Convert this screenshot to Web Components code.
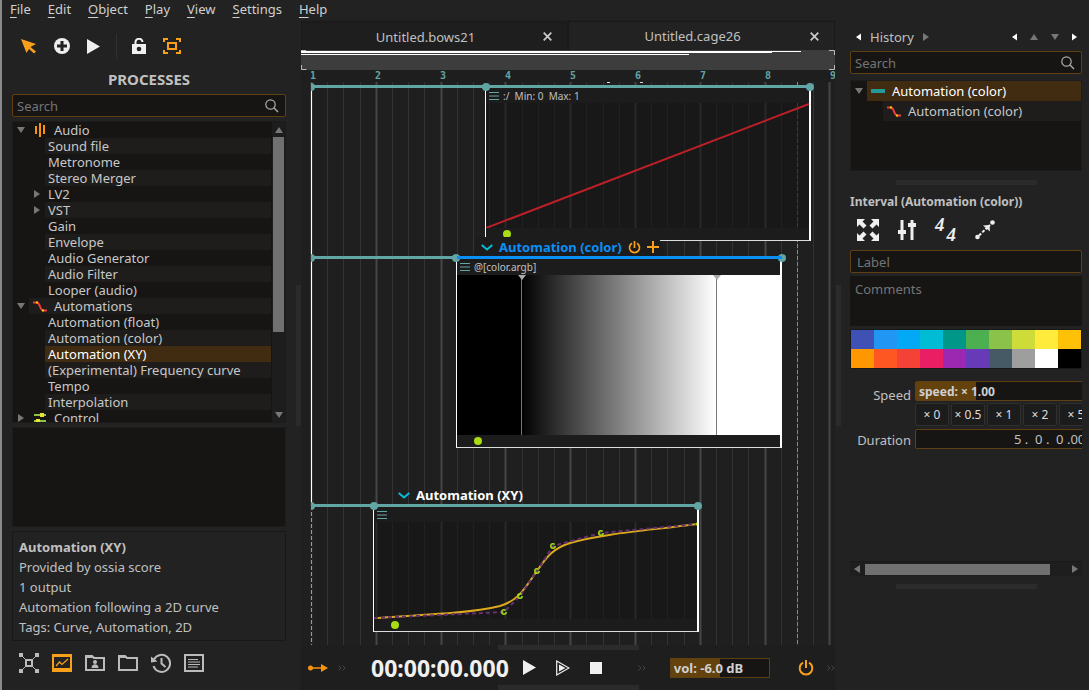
<!DOCTYPE html>
<html lang="en">
<head>
<meta charset="utf-8">
<title>score</title>
<style>
html,body{margin:0;background:#222;height:100%}
body{font:13px/16px "Noto Sans","Open Sans",sans-serif;color:#c0c0c0}
</style>
</head>
<body>
<score-app></score-app>
<script>
const RESET = `*{box-sizing:border-box}
button{font:inherit;color:inherit;background:none;border:0;padding:0;margin:0;display:flex;align-items:center;justify-content:center}
input,textarea{font:inherit;color:inherit;margin:0;outline:0;border-radius:2px}
::placeholder{color:#747474;opacity:1}
ul{list-style:none;margin:0;padding:0}`;

class Part extends HTMLElement {
  connectedCallback() {
    if (this.shadowRoot) return;
    const root = this.attachShadow({ mode: 'open' });
    root.innerHTML = `<style>:host{display:block}${RESET}${this.css()}</style>${this.html()}`;
  }
  css() { return ''; }
  html() { return '<slot></slot>'; }
}

/* Icons: [width, height, markup] */
const ICONS = {
  cursor: [16, 16, '<path fill="#f9a01b" d="M0 1 15 6 9.500 9 15 13.500 13 15.500 8 11 5.500 15z"/>'],
  add: [16, 16, '<circle cx="8" cy="8" r="8" fill="#eee"/><path d="M8 3v10M3 8h10" stroke="#222" stroke-width="3"/>'],
  play: [13, 15, '<path d="M0 0 13 7.500 0 15z" fill="#f0f0f0"/>'],
  lock: [14, 16, '<path d="M0 6h14v10H0z" fill="#f0f0f0"/><path d="M3.500 7V4.500a3.500 3.500 0 0 1 7-.5" fill="none" stroke="#f0f0f0" stroke-width="2"/><circle cx="7" cy="11" r="2.300" fill="#222"/>'],
  frame: [18, 16, '<path fill="none" stroke="#f9a01b" stroke-width="2" d="M1 4V1h4M13 1h4v3M17 12v3h-4M5 15H1v-3M5 5h8v6H5z"/>'],
  search: [14, 14, '<circle cx="5.500" cy="5.500" r="4.700" fill="none" stroke="#aaa" stroke-width="1.200"/><path d="M9 9l4 4" stroke="#aaa" stroke-width="1.500"/>'],
  down: [8, 6, '<path d="M0 0h8L4 6z" fill="#777"/>'],
  up: [8, 6, '<path d="M0 6h8L4 0z" fill="#777"/>'],
  right: [6, 8, '<path d="M0 0v8l6-4z" fill="#777"/>'],
  left: [6, 8, '<path d="M6 0v8L0 4z" fill="#777"/>'],
  rightOn: [5, 8, '<path d="M0 .5v7L5 4z" fill="#fff"/>'],
  leftOn: [5, 8, '<path d="M5 .5v7L0 4z" fill="#fff"/>'],
  audio: [10, 14, '<path d="M1 3v8M5 0v14M9 2v9" stroke="#f9930e" stroke-width="2"/>'],
  curve: [14, 11, '<path d="M0 1.500h4c3 0 3 8 6 8h4" fill="none" stroke="#f03c3c" stroke-width="2"/><path d="M3 1.500h2M9 9.500h2" stroke="#fc0" stroke-width="2"/>'],
  control: [12, 10, '<path d="M0 2h12M0 8h12" stroke="#8bc34a" stroke-width="2"/><path d="M6 2h4M2 8h4" stroke="#e5e532" stroke-width="4"/>'],
  bar: [14, 4, '<path d="M0 0h14v4H0z" fill="#229a9a"/>'],
  graph: [20, 20, '<path d="M3 3l5 5M17 3l-5 5M3 17l5-5M17 17l-5-5" stroke="#bbb"/><path d="M0 0h4v4H0zM16 0h4v4h-4zM0 16h4v4H0zM16 16h4v4h-4z" fill="#bbb"/><path d="M7 7h6v6H7z" fill="#222" stroke="#bbb" stroke-width="2"/>'],
  process: [20, 18, '<path d="M1 1h18v14H1z" fill="#222" stroke="#f9a01b" stroke-width="2"/><path d="M0 14h20v4H0zM0 0h20v3H0z" fill="#f9a01b"/><path d="M4 12l3.500-4 2.500 2.500L16 5" fill="none" stroke="#f9a01b" stroke-width="1.200"/>'],
  userdir: [20, 16, '<path d="M1 15V1h6l2 2h10v12z" fill="none" stroke="#bbb" stroke-width="2"/><path d="M0 0h7l2 3H0z" fill="#bbb"/><circle cx="10" cy="7" r="2" fill="#bbb"/><path d="M6.500 13c0-5 7-5 7 0z" fill="#bbb"/>'],
  folder: [20, 16, '<path d="M1 15V1h6l2 2h10v12z" fill="none" stroke="#bbb" stroke-width="2"/><path d="M0 0h7l2 3H0z" fill="#bbb"/>'],
  history: [20, 20, '<path d="M3 6.500A8.500 8.500 0 1 1 2.500 13" fill="none" stroke="#bbb" stroke-width="2"/><path d="M0 3.500 6.500 8.500 0 9.500z" fill="#bbb"/><path d="M10.500 5v5.500l4 3.500" fill="none" stroke="#bbb" stroke-width="2"/>'],
  list: [20, 18, '<path d="M1 1h18v16H1z" fill="none" stroke="#bbb" stroke-width="2"/><path d="M4 5.500h10M4 8h12M4 10.500h12M4 13h10" stroke="#bbb"/>'],
  close: [9, 9, '<path d="M.7.7l7.600 7.600M8.300.7.7 8.300" stroke="#ccc" stroke-width="1.700"/>'],
  menu: [10, 8, '<path d="M0 .5h10M0 4h10M0 7.500h10" stroke="#62a5a5"/>'],
  chevron: [12, 7, '<path d="M.7 1 6 5.500 11.300 1" fill="none" stroke="#06bcd6" stroke-width="2"/>'],
  power: [16, 16, '<path d="M5 2.700a6.300 6.300 0 1 0 6 0M8 0v8" fill="none" stroke="#f9a01b" stroke-width="2"/>'],
  powerSmall: [13, 13, '<path d="M4 2.300a5 5 0 1 0 5 0M6.500 0v7" fill="none" stroke="#f9a01b" stroke-width="1.700"/>'],
  plus: [12, 12, '<path d="M6 0v12M0 6h12" stroke="#f9a01b" stroke-width="2"/>'],
  link: [20, 8, '<circle cx="2.500" cy="4" r="2.500" fill="#f9930e"/><path d="M2 4h13" stroke="#f9930e" stroke-width="1.500"/><path d="M13 0l7 4-7 4z" fill="#f9930e"/>'],
  more: [8, 6, '<path d="M.5.5 3 3 .5 5.500M4.500.5 7 3 4.500 5.500" fill="none" stroke="#444"/>'],
  playOut: [14, 16, '<path d="M.7 1 13 8 .7 15z" fill="none" stroke="#f0f0f0" stroke-width="1.200"/><path d="M3 4.500 9.500 8 3 11.500z" fill="#f0f0f0"/>'],
  stop: [12, 12, '<path d="M0 0h12v12H0z" fill="#f0f0f0"/>'],
  expand: [22, 22, '<path fill="#eee" d="M0 0h8L5.500 2.500l4 4-3 3-4-4L0 8zM22 0v8l-2.500-2.500-4 4-3-3 4-4L14 0zM0 22v-8l2.500 2.500 4-4 3 3-4 4L8 22zM22 22h-8l2.500-2.500-4-4 3-3 4 4L22 14z"/>'],
  faders: [18, 20, '<path d="M4 0v20M14 0v20" stroke="#eee" stroke-width="3"/><path d="M0 10h8v4H0zM10 3h8v4h-8z" fill="#eee"/>'],
  interval: [20, 20, '<circle cx="2.500" cy="17" r="2.300" fill="#eee"/><circle cx="17.500" cy="2.500" r="2.300" fill="#eee"/><path d="M4 15.500 15 5" stroke="#eee" stroke-width="2" stroke-dasharray="3 1.500"/><path d="M8 5.500l6.500-.5.500 6.500z" fill="#eee"/>']
};
class ScoreIcon extends Part {
  css() { return ':host{display:block;flex:none}svg{display:block}'; }
  html() {
    const [w, h, body] = ICONS[this.getAttribute('name')];
    return `<svg width="${w}" height="${h}" viewBox="0 0 ${w} ${h}" aria-hidden="true">${body}</svg>`;
  }
}
customElements.define('score-icon', ScoreIcon);
const icon = n => `<score-icon name="${n}"></score-icon>`;
const iconButton = (n, label) => `<button aria-label="${label}">${icon(n)}</button>`;

customElements.define('score-menubar', class extends Part {
  css() { return `nav{display:flex;gap:17px;height:20px;padding-left:10px;line-height:18px;color:#d0d0d0}
    a{color:inherit;text-decoration:none}u{text-underline-offset:3px}`; }
  html() { return `<nav>${['File','Edit','Object','Play','View','Settings','Help']
    .map(t => `<a href="#${t}"><u>${t[0]}</u>${t.slice(1)}</a>`).join('')}</nav>`; }
});

customElements.define('score-handle', class extends Part {
  css() { return `:host{display:flex;align-items:center;justify-content:center;flex:none}
    i{background:#2b2b2b;width:141px;height:5px}:host([vertical]) i{width:5px;height:141px}`; }
  html() { return '<i></i>'; }
});

customElements.define('score-search', class extends Part {
  css() { return `label{display:flex;align-items:center;height:23px;background:#161514;border:1px solid #5f4010;border-radius:2px;padding:0 6px 0 4px}
    input{flex:1;min-width:0;background:none;border:0;padding:0}`; }
  html() { return `<label><input type="search" placeholder="Search" aria-label="Search">${icon('search')}</label>`; }
});

customElements.define('score-row', class extends Part {
  css() {
    const step = this.getAttribute('height') || 16;
    const level = +this.getAttribute('level') || 0;
    const bg = this.hasAttribute('selected') ? '#412b11' : this.hasAttribute('alt') ? '#1e1d1c' : 'transparent';
    return `:host{display:flex;height:${step}px;line-height:${step}px}
      .branch{width:${(level + 1) * 16}px;display:flex;justify-content:flex-end;align-items:center;flex:none}
      .arrow{width:16px;display:flex;justify-content:center}
      .cell{flex:1;display:flex;align-items:center;background:${bg};padding-left:3px;white-space:nowrap;color:${this.hasAttribute('selected') ? '#fff' : '#c8c8c8'}}
      .ico{width:22px;display:flex;justify-content:center;padding-right:6px}`;
  }
  html() {
    const i = this.getAttribute('icon'), a = this.getAttribute('arrow');
    return `<span class="branch"><span class="arrow">${a ? icon(a) : ''}</span></span>
      <span class="cell">${i ? `<span class="ico">${icon(i)}</span>` : ''}<slot></slot></span>`;
  }
});

customElements.define('score-processes', class extends Part {
  css() { return `:host{display:flex;flex-direction:column;padding:0 10px}
    .tools{display:flex;align-items:center;height:50px;padding:2px 0 0 9px;gap:17px}
    .tools hr{width:1px;height:25px;border:0;background:#303030;margin:0 -2px 0 -1px}
    h2{font-size:15px;line-height:18px;margin:0;text-align:center;height:24px}
    .tree{display:flex;height:302px;margin-top:4px;background:#161514;border:1px solid #1c1c1c;overflow:hidden}
    .rows{flex:1;overflow:hidden}
    .bar{width:13px;flex:none;margin-left:1px;display:flex;flex-direction:column;background:#1d1d1d}
    .bar button{height:15px;flex:none}.thumb{height:195px;background:#707070;margin:0 1px}.bar .gap{flex:1}
    .preview{height:100px;margin-top:4px;background:#161514;border:1px solid #1c1c1c}
    .info{height:110px;margin-top:4px;border:1px solid #181818;padding:5px 6px;line-height:20px}
    .info p,.info h3{margin:0;font-size:13px;line-height:20px}
    .docks{display:flex;align-items:center;gap:13px;height:44px;padding-left:7px}`; }
  html() {
    const items = [
      ['Audio', 0, 'down', 'audio'], ['Sound file', 1], ['Metronome', 1], ['Stereo Merger', 1],
      ['LV2', 1, 'right'], ['VST', 1, 'right'], ['Gain', 1], ['Envelope', 1], ['Audio Generator', 1],
      ['Audio Filter', 1], ['Looper (audio)', 1], ['Automations', 0, 'down', 'curve'],
      ['Automation (float)', 1], ['Automation (color)', 1], ['Automation (XY)', 1],
      ['(Experimental) Frequency curve', 1], ['Tempo', 1], ['Interpolation', 1], ['Control', 0, 'right', 'control']];
    const rows = items.map(([t, l, a, i], n) => `<score-row level="${l}" ${a ? `arrow="${a}"` : ''} ${i ? `icon="${i}"` : ''}
      ${n % 2 ? 'alt' : ''} ${t === 'Automation (XY)' ? 'selected' : ''}>${t}</score-row>`).join('');
    return `<div class="tools">${iconButton('cursor', 'Select')}${iconButton('add', 'Create')}${iconButton('play', 'Play')}<hr>
      ${iconButton('lock', 'Lock')}${iconButton('frame', 'Scale')}</div>
      <h2>PROCESSES</h2><score-search></score-search>
      <div class="tree"><div class="rows">${rows}</div><div class="bar">${iconButton('up', 'Scroll up')}<div class="thumb"></div><div class="gap"></div>${iconButton('down', 'Scroll down')}</div></div>
      <div class="preview"></div>
      <div class="info"><h3>Automation (XY)</h3><p>Provided by ossia score</p><p>1 output</p><p>Automation following a 2D curve</p><p>Tags: Curve, Automation, 2D</p></div>
      <div class="docks">${iconButton('graph', 'Devices')}${iconButton('process', 'Processes')}${iconButton('userdir', 'User library')}${iconButton('folder', 'Project')}${iconButton('history', 'History')}${iconButton('list', 'Messages')}</div>`;
  }
});

customElements.define('score-tabs', class extends Part {
  css() { return `:host{display:flex;height:29px;align-items:flex-end}
    .tab{flex:1;height:28px;display:flex;align-items:center;padding-right:15px;background:#1e1e1e;border:1px solid #191919;border-bottom:0}
    .tab.on{height:29px;background:#222}.tab .name{flex:1;height:26px;padding-left:6px}`; }
  html() { return `<div class="tab"><button class="name">Untitled.bows21</button>${iconButton('close', 'Close')}</div>
    <div class="tab on"><button class="name">Untitled.cage26</button>${iconButton('close', 'Close')}</div>`; }
});

customElements.define('score-minimap', class extends Part {
  css() { return `:host{height:20px;background:#3d3d3d}svg{display:block;width:100%;height:20px}`; }
  html() { return `<svg aria-hidden="true"><path d="M0 1.500h500" stroke="#fff"/><path d="M0 2.500h471" stroke="#fff"/><path d="M0 4.500h388" stroke="#fff"/>
    <path d="M.5 15v4.500h5M0 .5h5" fill="none" stroke="#bbb"/><svg x="100%" overflow="visible"><path d="M-6 .5h5.500V5M-.5 15v4.500H-6" fill="none" stroke="#bbb"/></svg></svg>`; }
});

customElements.define('score-ruler', class extends Part {
  css() { return `ol{list-style:none;margin:0;padding:0 0 0 9px;display:grid;grid-template-columns:repeat(9,65px);height:12px;overflow:hidden;
    font:bold 10px/12px "DejaVu Sans Mono",monospace;color:#62a5a5}`; }
  html() { return `<ol>${[1,2,3,4,5,6,7,8,9].map(n => `<li>${n}</li>`).join('')}</ol>`; }
});

/* A process box on the timeline: header, drawing, footer */
customElements.define('score-slot', class extends Part {
  css() { return `:host{position:absolute;display:flex;flex-direction:column;width:326px;border:1px solid #ddd;border-left-color:#fff;border-right:2px solid #fff;border-top:0}
    header{height:var(--head,15px);background:#1c1c1c;display:flex;align-items:center;gap:4px;padding:0 4px 0 3px;font-size:10px;line-height:14px;white-space:pre}
    footer{height:12px;background:#1c1c1c;display:flex;align-items:center;padding-left:17px}
    footer i{width:8px;height:8px;border-radius:50%;background:#a8dc14}`; }
  html() { return `<header>${icon('menu')}<slot name="label"></slot></header><slot></slot><footer><i></i></footer>`; }
});

customElements.define('score-timeline', class extends Part {
  css() { return `:host{position:relative;flex:1;min-height:563px;background:#1f1f1f;overflow:hidden}
    svg.layer{position:absolute;inset:0;width:100%;height:100%}
    score-slot svg{display:block}
    .a{left:184px;top:6px}.b{left:155px;top:177px;--head:16px}.c{left:72px;top:425px}
    .grad{height:160px;background:linear-gradient(90deg,#000 64px,#fff 259px)}
    .grad svg{width:100%}
    .title{position:absolute;display:flex;align-items:center;gap:6px;height:20px;font-weight:bold;white-space:nowrap}
    .t1{left:172px;top:155px;width:192px;padding-left:8px;background:#1c1c1c;color:#0a8ff5;clip-path:polygon(4px 0,186px 0,100% 100%,0 100%)}
    .t2{left:97px;top:403px;color:#fff}`; }
  html() {
    let grid = '';
    const ghosts = x0 => {
      let s = '';
      for (let i = 0; i < 40; i++) {
        const x = Math.round(10 + i * 16.2) - x0;
        if (x > 1 && x < 323) s += `<path d="M${x + .5} 0v200" stroke="${i % 4 ? '#212121' : '#292929'}" stroke-width="${i % 4 ? 1 : 2}"/>`;
      }
      return s;
    };
    for (let i = 0; i < 160; i++) {
      const x = Math.round(10 + i * 16.2) + .5;
      grid += `<line x1="${x}" x2="${x}" y1="0" y2="100%" stroke="${i % 4 ? '#333' : '#464646'}" stroke-width="${i % 4 ? 1 : 2}"/>`;
    }
    const knob = (x, y) => `<circle cx="${x}" cy="${y}" r="4" fill="#62a5a5"/>`;
    const pts = [[130, 90], [146, 74], [163, 49], [179, 24], [227, 11]];
    return `<svg class="layer" aria-hidden="true">${grid}
      <line x1="10.500" x2="10.500" y1="424" y2="100%" stroke="#1f1f1f" stroke-width="2"/>
      <line x1="10.500" x2="10.500" y1="424" y2="100%" stroke="#999" stroke-dasharray="4 2"/>
      <line x1="496.500" x2="496.500" y1="0" y2="100%" stroke="#8a8a8a" stroke-dasharray="4 2"/>
      <path d="M10.500 6v418" stroke="#fff"/><path d="M306 0h3v1h-3zM339 0h3v1h-3z" fill="#ddd"/></svg>
    <score-slot class="a"><span slot="label">:/  Min: 0  Max: 1</span>
      <svg width="323" height="125" style="background:#181818">${ghosts(185)}<path d="M311.500 0v125" stroke="#3c3c3c" stroke-dasharray="4 2"/><path d="M0 125 323 1" stroke="#bf2028" stroke-width="2"/></svg></score-slot>
    <score-slot class="b"><span slot="label">@[color.argb]</span>
      <div class="grad"><svg height="160"><path d="M64.500 0v160M259.500 0v160" stroke="#777"/><path d="M61 0h8l-4 5zM256 0h8l-4 5z" fill="#aaa"/></svg></div></score-slot>
    <score-slot class="c"><svg width="323" height="97" style="background:#181818">${ghosts(73)}
      <path d="M0 96C50 93 98 91 126 84C146 78 152 64 163 49C173 34 180 26 196 21C230 11 280 8 323 2" fill="none" stroke="#dca81e" stroke-width="2"/>
      <path d="M0 96 130 90 146 74 163 49 179 24 227 11 323 2" fill="none" stroke="#64306f" stroke-width="2" stroke-dasharray="4 3"/>
      ${pts.map(([x, y]) => `<circle cx="${x}" cy="${y}" r="2.200" fill="none" stroke="#a0dc14" stroke-width="1.500" stroke-dasharray="11 3"/>`).join('')}
      <circle cx="323" cy="2" r="1.500" fill="#a0dc14"/></svg></score-slot>
    <div class="title t1">${icon('chevron')}<span>Automation (color)</span>${icon('powerSmall')}${icon('plus')}</div>
    <div class="title t2">${icon('chevron')}<span>Automation (XY)</span></div>
    <svg class="layer" aria-hidden="true" style="pointer-events:none">
      <path d="M10 4.500h500M10 175.500h146M10 423.500h388" stroke="#62a5a5" stroke-width="3"/>
      <path d="M10 1a4 4 0 0 1 0 8zM10 172a4 4 0 0 1 0 8zM10 420a4 4 0 0 1 0 8z" fill="#62a5a5"/>
      ${knob(185, 5)}${knob(509, 5)}${knob(155, 176)}${knob(481, 176)}${knob(73, 424)}${knob(397, 424)}<path d="M156 175.500h325" stroke="#0a8ff5" stroke-width="3"/></svg>`;
  }
});

customElements.define('score-transport', class extends Part {
  css() { return `:host{display:flex;align-items:center;height:35px;padding-left:7px;background:#1e1e1e}
    .time{font-size:23px;line-height:28px;font-weight:bold;color:#f0f0f0;margin-left:25px}
    .keys{display:flex;align-items:center;gap:20px;margin-left:14px}.m1{margin-left:10px}.m2{margin-left:36px}.m3{margin-left:13px}
    input{width:100px;height:20px;margin-left:24px;border:1px solid #5f4010;border-radius:0;padding:0 3px;font-weight:bold;color:#d0d0d0;background:linear-gradient(90deg,#64420e 50%,#161514 50%)}
    .pw{margin-left:auto}`; }
  html() { return `${iconButton('link', 'Link')}<span class="m1">${icon('more')}</span><output class="time">00:00:00.000</output>
    <span class="keys">${iconButton('play', 'Play')}${iconButton('playOut', 'Play from start')}${iconButton('stop', 'Stop')}</span>
    <span class="m2">${icon('more')}</span><input aria-label="Volume" value="vol: -6.0 dB"><span class="pw">${iconButton('power', 'Audio engine')}</span><span class="m3">${icon('more')}</span>`; }
});

customElements.define('score-inspector', class extends Part {
  css() { return `:host{display:block;padding:2px 7px 0 9px;min-width:0}
    .nav{display:flex;align-items:center;height:29px;padding:0 5px 0 6px;gap:9px}.nav .sp{flex:1}.nav .end{display:flex;gap:13px;align-items:center}
    .objects{height:91px;margin-top:6px;background:#161514;border:1px solid #1c1c1c}
    score-handle{height:23px}
    h3{margin:0;font-size:12px;line-height:16px}
    .icons{display:flex;gap:19px;align-items:center;height:40px;padding-left:7px}
    .sig{display:flex;font:italic bold 19px/16px "Liberation Serif",serif;color:#eee;gap:2px}.sig b:last-child{padding-top:10px}.sig b:first-child{padding-bottom:10px}
    .label{display:block;width:100%;height:23px;background:#161514;border:1px solid #5f4010;padding:0 6px}
    textarea{display:block;width:100%;height:50px;margin-top:3px;background:#161514;border:0;border-radius:0;padding:5px;resize:none;line-height:16px}
    .pal{display:grid;grid-template-columns:repeat(10,1fr);grid-auto-rows:19px;margin-top:3px;border:1px solid #181818}
    .form{display:grid;grid-template-columns:61px 200px;column-gap:4px;margin-top:12px;overflow:hidden}
    .form label{text-align:right;line-height:16px;align-self:end;padding-bottom:1px}
    .form label.s{align-self:start;padding-top:6px}
    .form input{display:block;height:20px;width:200px;border:1px solid #5f4010;background:#161514}
    .form .speed{padding:0 3px;font-size:12px;font-weight:bold;color:#d0d0d0;background:linear-gradient(90deg,#64420e 60px,#161514 60px)}
    .form .dur{padding:0 0 0 98px;margin-top:3px}
    .btns{display:flex;gap:2px;margin-top:2px}.btns button{width:34px;height:23px;border:1px solid #303030;border-radius:3px;background:#1c1c1c;flex:none;font-size:12px;white-space:nowrap;color:#ddd}
    .hbar{display:flex;height:15px;margin-top:112px;background:#1e1e1e;border-top:1px solid #191919;align-items:center}
    .hbar button{width:14px;height:14px;flex:none}.hbar div{width:185px;height:11px;background:#707070;margin:0 auto 0 1px}
    .last{height:21px}`; }
  html() {
    const colors = ['3f51b5','2196f3','03a9f4','00bcd4','009688','4caf50','8bc34a','cddc39','ffeb3b','ffc107','ff9800','ff5722','f44336','e91e63','9c27b0','673ab7','455a64','9e9e9e','ffffff','000000'];
    return `<div class="nav">${iconButton('leftOn', 'Back')}<span>History</span>${iconButton('right', 'Forward')}<span class="sp"></span>
      <span class="end">${iconButton('leftOn', 'Left')}${iconButton('up', 'Up')}${iconButton('down', 'Down')}${iconButton('rightOn', 'Right')}</span></div>
      <score-search></score-search>
      <div class="objects"><score-row height="20" level="0" arrow="down" icon="bar" selected>Automation (color)</score-row><score-row height="20" level="1" icon="curve" alt>Automation (color)</score-row></div>
      <score-handle></score-handle>
      <h3>Interval (Automation (color))</h3>
      <div class="icons">${iconButton('expand', 'Full view')}${iconButton('faders', 'Mixer')}<button class="sig" aria-label="Time signature"><b>4</b><b>4</b></button>${iconButton('interval', 'Interval')}</div>
      <input class="label" placeholder="Label" aria-label="Label"><textarea placeholder="Comments" aria-label="Comments"></textarea>
      <div class="pal">${colors.map(c => `<button style="background:#${c}" aria-label="#${c}"></button>`).join('')}</div>
      <div class="form"><label class="s" for="speed">Speed</label><div><input id="speed" class="speed" value="speed: × 1.00">
      <div class="btns">${['0','0.5','1','2','5'].map(n => `<button>× ${n}</button>`).join('')}</div></div>
      <label for="dur">Duration</label><input id="dur" class="dur" value="5 .  0 .  0 .000"></div>
      <div class="hbar">${iconButton('left', 'Scroll left')}<div></div>${iconButton('right', 'Scroll right')}</div>
      <score-handle class="last"></score-handle>`;
  }
});

customElements.define('score-app', class extends Part {
  css() { return `:host{display:flex;flex-direction:column;min-height:100vh;background:#222;border-left:2px solid #8a8a8a}
    main{flex:1;display:grid;grid-template-columns:294px 5px minmax(534px,1fr) 6px 248px}
    score-menubar{margin-left:-2px}
    .center{display:flex;flex-direction:column;min-width:0;background:#1e1e1e;padding-top:1px}
    .center score-handle{height:5px}`; }
  html() { return `<score-menubar></score-menubar><main><score-processes></score-processes><score-handle vertical></score-handle>
    <div class="center"><score-tabs></score-tabs><score-minimap></score-minimap><score-ruler></score-ruler><score-timeline></score-timeline>
    <score-handle></score-handle><score-transport></score-transport><score-handle></score-handle></div>
    <score-handle vertical></score-handle><score-inspector></score-inspector></main>`; }
});
</script>
</body>
</html>
